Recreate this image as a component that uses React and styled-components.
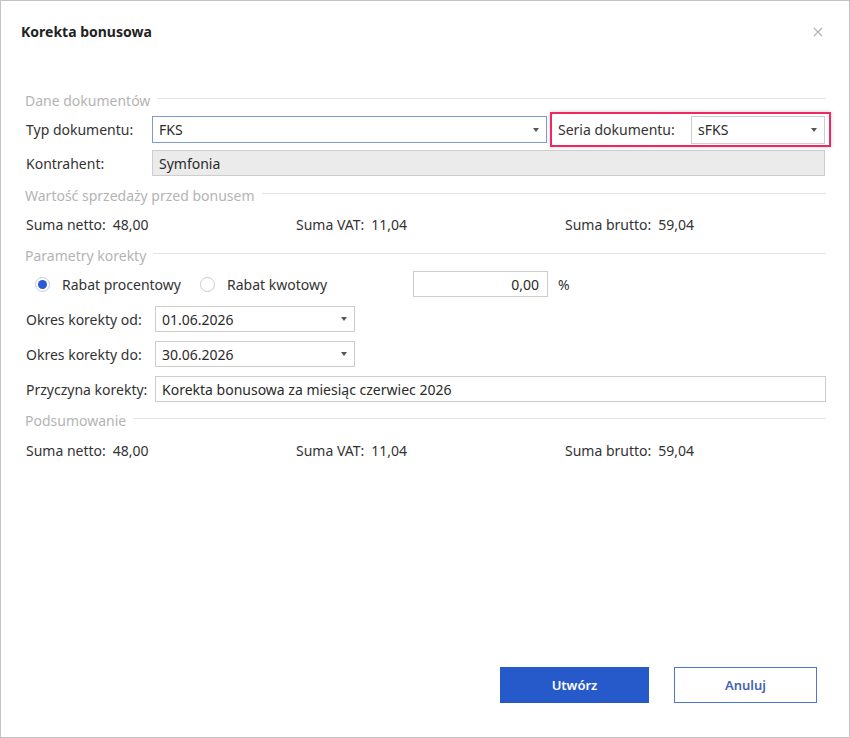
import React from 'react';
import styled, { createGlobalStyle } from 'styled-components';

const Global = createGlobalStyle`
	html, body {
		margin: 0;
		padding: 0;
		background: #fff;
	}
	body {
		font-family: 'Noto Sans', 'Open Sans', Arial, sans-serif;
		font-size: 14px;
		color: #333;
	}
`;

const Window = styled.div`
	box-sizing: border-box;
	width: 850px;
	height: 738px;
	border: 1px solid #c4c4c4;
	background: #fff;
	display: flex;
	flex-direction: column;
`;

const Header = styled.div`
	display: flex;
	justify-content: space-between;
	align-items: center;
	padding: 22px 26px 0 20px;
	height: 18px;
`;

const Title = styled.h1`
	margin: 0;
	font-size: 14px;
	font-weight: 700;
	color: #222;
	line-height: 18px;
`;

const Close = styled.button`
	border: 0;
	background: none;
	padding: 0;
	width: 10px;
	height: 10px;
	display: flex;
	cursor: pointer;
`;

const Form = styled.div`
	display: flex;
	flex-direction: column;
	padding: 0 23px 0 24px;
	margin-top: 49px;
`;

const Legend = styled.div`
	display: flex;
	align-items: center;
	gap: 7px;
	height: 20px;
	margin-top: ${p => p.$mt || 0}px;
	color: #b4b4b4;
	white-space: nowrap;

	&::after {
		content: '';
		flex: 1;
		height: 1px;
		background: #e4e4e4;
		margin-top: -3px;
	}
`;

const Row = styled.div`
	display: flex;
	align-items: center;
	margin-top: ${p => p.$mt || 0}px;
	min-height: ${p => p.$h || 26}px;
`;

const Label = styled.span`
	width: ${p => p.$w || 126}px;
	flex-shrink: 0;
	padding-left: 1px;
	white-space: nowrap;
`;

const Box = styled.div`
	box-sizing: border-box;
	display: flex;
	align-items: center;
	justify-content: ${p => (p.$right ? 'flex-end' : 'space-between')};
	width: ${p => (p.$w ? `${p.$w}px` : 'auto')};
	flex: ${p => (p.$w ? 'none' : 1)};
	height: ${p => p.$h || 26}px;
	padding: 0 8px 0 6px;
	border: 1px solid ${p => (p.$focus ? '#7d9ad6' : '#cdcdcd')};
	background: ${p => (p.$disabled ? '#ebebec' : '#fff')};
	color: #2a2a2a;
	white-space: nowrap;
`;

const Arrow = styled.span`
	width: 0;
	height: 0;
	border-left: 3.5px solid transparent;
	border-right: 3.5px solid transparent;
	border-top: 4px solid #555;
	margin-right: -1px;
`;

const Highlight = styled.div`
	box-sizing: border-box;
	display: flex;
	align-items: center;
	height: 35px;
	margin-left: 3px;
	margin-right: -5px;
	padding: 0 4px 0 5px;
	border: 2px solid #f0285f;
	box-shadow: 0 0 4px rgba(0, 0, 0, 0.18);
`;

const Summary = styled.div`
	display: grid;
	grid-template-columns: 270px 269px 1fr;
	height: 20px;
	align-items: center;
	margin-top: ${p => p.$mt || 0}px;
	padding-left: 1px;
`;

const Sum = styled.span`
	white-space: nowrap;
	& b {
		font-weight: 400;
		margin-left: 7px;
	}
`;

const Radio = styled.label`
	display: flex;
	align-items: center;
	gap: 12px;
	width: ${p => p.$w}px;
	flex-shrink: 0;
	white-space: nowrap;
`;

const Dot = styled.span`
	box-sizing: border-box;
	width: 15px;
	height: 15px;
	border-radius: 50%;
	border: 1px solid #cbcbcb;
	background: #fff;
	display: flex;
	align-items: center;
	justify-content: center;

	&::after {
		content: '';
		width: 9px;
		height: 9px;
		border-radius: 50%;
		background: ${p => (p.$on ? '#2a5bd7' : 'transparent')};
	}
`;

const Unit = styled.span`
	margin-left: 10px;
`;

const Footer = styled.div`
	margin-top: auto;
	display: flex;
	justify-content: flex-end;
	gap: 25px;
	padding: 0 32px 34px 0;
`;

const Button = styled.button`
	box-sizing: border-box;
	width: ${p => p.$w}px;
	height: 36px;
	font-family: inherit;
	font-size: 13px;
	font-weight: 600;
	cursor: pointer;
	border: 1px solid ${p => (p.$primary ? '#2659c9' : '#4f76d2')};
	background: ${p => (p.$primary ? '#2659c9' : '#fff')};
	color: ${p => (p.$primary ? '#fff' : '#4463b8')};
`;

const Combo = ({ value, ...rest }) => (
	<Box {...rest}>
		<span>{value}</span>
		<Arrow />
	</Box>
);

const Totals = ({ mt }) => (
	<Summary $mt={mt}>
		<Sum>Suma netto:<b>48,00</b></Sum>
		<Sum>Suma VAT:<b>11,04</b></Sum>
		<Sum>Suma brutto:<b>59,04</b></Sum>
	</Summary>
);

export default function App() {
	return (
		<>
			<Global />
			<Window>
				<Header>
					<Title>Korekta bonusowa</Title>
					<Close aria-label="Zamknij">
						<svg width="10" height="10" viewBox="0 0 10 10">
							<path d="M1 1L9 9M9 1L1 9" stroke="#b3b3b3" strokeWidth="1.2" />
						</svg>
					</Close>
				</Header>
				<Form>
					<Legend>Dane dokumentów</Legend>
					<Row $mt={2} $h={35}>
						<Label $w={126}>Typ dokumentu:</Label>
						<Combo value="FKS" $focus $h={27} $w={395} />
						<Highlight>
							<Label $w={133}>Seria dokumentu:</Label>
							<Combo value="sFKS" $h={28} $w={134} />
						</Highlight>
					</Row>
					<Row $mt={3}>
						<Label $w={126}>Kontrahent:</Label>
						<Box $disabled style={{ marginRight: 1 }}>Symfonia</Box>
					</Row>
					<Legend $mt={9}>Wartość sprzedaży przed bonusem</Legend>
					<Totals mt={9} />
					<Legend $mt={11}>Parametry korekty</Legend>
					<Row $mt={6}>
						<Radio $w={165} style={{ marginLeft: 10 }}>
							<Dot $on />
							Rabat procentowy
						</Radio>
						<Radio $w={213}>
							<Dot />
							Rabat kwotowy
						</Radio>
						<Box $right $w={135}>0,00</Box>
						<Unit>%</Unit>
					</Row>
					<Row $mt={9}>
						<Label $w={129}>Okres korekty od:</Label>
						<Combo value="01.06.2026" $w={200} />
					</Row>
					<Row $mt={9}>
						<Label $w={129}>Okres korekty do:</Label>
						<Combo value="30.06.2026" $w={200} />
					</Row>
					<Row $mt={9}>
						<Label $w={129}>Przyczyna korekty:</Label>
						<Box>Korekta bonusowa za miesiąc czerwiec 2026</Box>
					</Row>
					<Legend $mt={8}>Podsumowanie</Legend>
					<Totals mt={10} />
				</Form>
				<Footer>
					<Button $primary $w={149}>Utwórz</Button>
					<Button $w={143}>Anuluj</Button>
				</Footer>
			</Window>
		</>
	);
}
